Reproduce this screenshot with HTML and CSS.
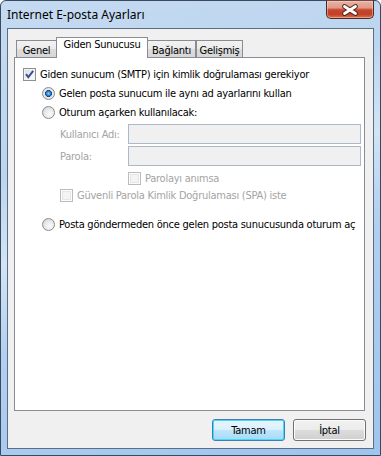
FILE: index.html
```html
<!DOCTYPE html>
<html lang="tr">
<head>
    <meta charset="UTF-8">
    <title>Internet E-posta Ayarları</title>
    <link rel="stylesheet" href="styles.css">
</head>
<body>
<div class="window">
    <div class="titlebar">
        <span class="title">Internet E-posta Ayarları</span>
        <div class="close">
            <svg width="46" height="17" viewBox="0 0 46 17">
                <path d="M17.5 5.5 L28.5 12.5 M28.5 5.5 L17.5 12.5" stroke="#4a2219" stroke-width="4.8" stroke-linecap="round" fill="none"/>
                <path d="M17.5 5.5 L28.5 12.5 M28.5 5.5 L17.5 12.5" stroke="#ffffff" stroke-width="2.8" stroke-linecap="round" fill="none"/>
            </svg>
        </div>
    </div>

    <div class="client">
        <div class="tabs">
            <div class="tab tab-genel">Genel</div>
            <div class="tab tab-active">Giden Sunucusu</div>
            <div class="tab tab-baglanti">Bağlantı</div>
            <div class="tab tab-gelismis">Gelişmiş</div>
        </div>

        <div class="panel">
            <label class="row row-auth">
                <span class="cb">
                    <svg width="11" height="11" viewBox="0 0 11 11">
                        <path d="M2 5.2 L4.3 8.2 L9.2 1.8" stroke="#3b4f8c" stroke-width="1.9" fill="none"/>
                    </svg>
                </span>
                Giden sunucum (SMTP) için kimlik doğrulaması gerekiyor
            </label>
            <label class="row row-same indent">
                <span class="radio radio-on"></span>
                Gelen posta sunucum ile aynı ad ayarlarını kullan
            </label>
            <label class="row row-logon indent">
                <span class="radio"></span>
                Oturum açarken kullanılacak:
            </label>
            <div class="row field row-user">
                <span class="field-label">Kullanıcı Adı:</span>
                <span class="textbox"></span>
            </div>
            <div class="row field row-pass">
                <span class="field-label">Parola:</span>
                <span class="textbox"></span>
            </div>
            <label class="row row-remember disabled">
                <span class="cb cb-off"></span>
                Parolayı anımsa
            </label>
            <label class="row row-spa disabled">
                <span class="cb cb-off"></span>
                Güvenli Parola Kimlik Doğrulaması (SPA) iste
            </label>
            <label class="row row-before indent">
                <span class="radio"></span>
                Posta göndermeden önce gelen posta sunucusunda oturum aç
            </label>
        </div>

        <div class="buttons">
            <button class="btn btn-default">Tamam</button>
            <button class="btn">İptal</button>
        </div>
    </div>
</div>
</body>
</html>
```

FILE: styles.css
```css
body {
    margin: 0;
    background-color: #ffffff;
    font-family: "DejaVu Sans Condensed", "Liberation Sans", sans-serif;
    font-size: 11px;
    letter-spacing: -0.25px;
    color: #000;
}
.window {
    width: 381px;
    height: 456px;
    box-sizing: border-box;
    border: 1px solid #3a4a5e;
    border-radius: 6px 6px 0 0;
    padding: 0 6px 6px;
    display: flex;
    flex-direction: column;
    background: linear-gradient(160deg, #c4daf1 0%, #bcd5ef 30%, #d2e4f6 45%, #b2cff0 60%, #9ec5ee 100%);
}
.titlebar {
    height: 27px;
    display: flex;
    align-items: flex-start;
}
.title {
    font-family: "Noto Sans", sans-serif;
    font-size: 12px;
    letter-spacing: 0;
    line-height: 16px;
    margin: 6px 0 0 0;
}
.close {
    margin-left: auto;
    margin-top: -1px;
    width: 46px;
    height: 17px;
    border: 1px solid #4a2a24;
    border-top-color: #6b4a44;
    border-radius: 0 0 5px 5px;
    background: linear-gradient(#e9b2a5 0%, #de9a89 40%, #c9462c 52%, #c23f27 78%, #d8744f 100%);
    box-shadow: inset 0 0 0 1px rgba(255, 220, 210, 0.45);
}
.close svg {
    display: block;
}
.client {
    flex: 1;
    border: 1px solid #5a6e84;
    background-color: #f0f0f0;
    padding: 8px 8px 7px 6px;
    display: flex;
    flex-direction: column;
}

/* tab strip */
.tabs {
    height: 20px;
    display: flex;
    align-items: flex-end;
    padding-left: 2px;
    position: relative;
    z-index: 1;
}
.tab {
    box-sizing: border-box;
    height: 17px;
    border: 1px solid #898c95;
    border-bottom: none;
    text-align: center;
    line-height: 19px;
    background: linear-gradient(#f2f2f2 0%, #ebebeb 50%, #dddddd 51%, #d6d6d6 100%);
}
.tab-genel { width: 41px; }
.tab-active {
    width: 92px;
    height: 21px;
    margin-left: -1px;
    margin-bottom: -1px;
    background: #ffffff;
    line-height: 14px;
    position: relative;
    z-index: 2;
}
.tab-baglanti { width: 49px; margin-left: -1px; }
.tab-gelismis { width: 47px; }

/* tab page */
.panel {
    flex: 1;
    border: 1px solid #898c95;
    background-color: #ffffff;
    padding: 0 0 0 8px;
}
.row {
    display: flex;
    align-items: center;
    gap: 4px;
    height: 13px;
    white-space: nowrap;
}
.row-auth { margin-top: 10px; }
.row-same { margin-top: 6px; }
.row-logon { margin-top: 6px; }
.row-user { margin-top: 5px; }
.row-pass { margin-top: 2px; }
.row-remember { margin-top: 6px; padding-left: 105px; }
.row-spa { margin-top: 4px; padding-left: 37px; }
.row-before { margin-top: 16px; }
.indent { padding-left: 19px; }
.field {
    height: 20px;
    padding-left: 37px;
    gap: 0;
}
.field-label {
    width: 68px;
    color: #a3a3a3;
}
.disabled {
    color: #a3a3a3;
}
.textbox {
    width: 233px;
    height: 20px;
    box-sizing: border-box;
    border: 1px solid #adb8ca;
    background-color: #f0f0f0;
}

/* check boxes and radio buttons */
.cb {
    width: 13px;
    height: 13px;
    box-sizing: border-box;
    flex: none;
    border: 1px solid #8e8f8f;
    background: linear-gradient(135deg, #d7dbe0 0%, #f1f2f4 60%, #fbfbfb 100%);
    box-shadow: inset 0 0 0 1px #f4f4f4;
    display: flex;
    align-items: center;
    justify-content: center;
}
.cb-off {
    border-color: #bcbcbc;
    background: #f4f4f4;
    box-shadow: inset 0 0 0 1px #fcfcfc, inset 0 0 0 2px #e6e6e6;
}
.cb svg {
    display: block;
}
.radio {
    width: 13px;
    height: 13px;
    box-sizing: border-box;
    flex: none;
    border-radius: 50%;
    border: 1px solid #8a8b8c;
    background: radial-gradient(circle at 60% 65%, #fbfbfb 0%, #e9eaec 45%, #c9ccd1 100%);
}
.radio-on {
    background: radial-gradient(circle at 50% 50%, #8fd2f8 0%, #2a7cc4 28%, #0f467f 42%, #e8ebef 48%, #d2d6dc 100%);
}

/* dialog buttons */
.buttons {
    height: 22px;
    margin-top: 8px;
    margin-right: -1px;
    display: flex;
    justify-content: flex-end;
    gap: 8px;
}
.btn {
    width: 73px;
    height: 22px;
    box-sizing: border-box;
    border: 1px solid #707070;
    border-radius: 3px;
    font-family: inherit;
    font-size: 11px;
    letter-spacing: inherit;
    color: #000;
    padding: 0;
    background: linear-gradient(#f2f2f2 0%, #ebebeb 50%, #dddddd 51%, #cfcfcf 100%);
    box-shadow: inset 0 0 0 1px #fcfcfc;
}
.btn-default {
    border-color: #3c7fb1;
    background: linear-gradient(#eaf6fd 0%, #d9f0fc 50%, #bee6fd 51%, #a7d9f5 100%);
    box-shadow: inset 0 0 0 1px #48d8fb;
}
```
